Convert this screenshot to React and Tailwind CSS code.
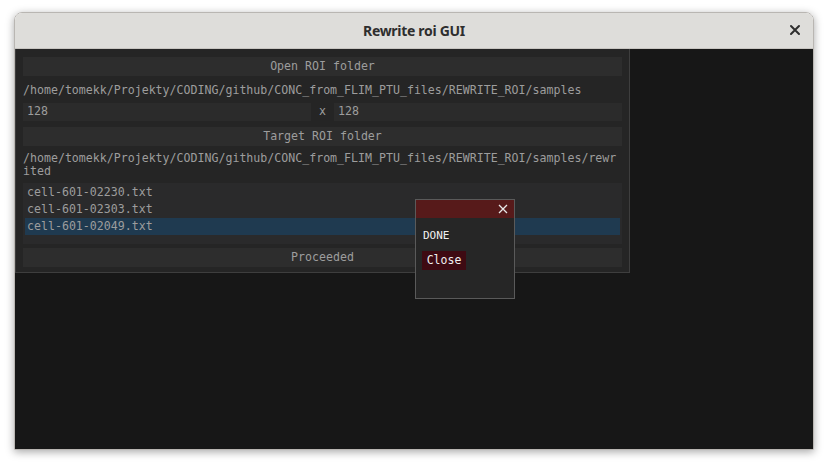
import React from "react";

const mono = "font-['DejaVu_Sans_Mono','Liberation_Mono',monospace]";

const files = ["cell-601-02230.txt", "cell-601-02303.txt", "cell-601-02049.txt"];

export default function App() {
    return (
        <div className="w-[828px] h-[466px] bg-white relative overflow-hidden">
            {/* okno aplikacji */}
            <div className="absolute left-[14px] top-[12px] w-[800px] h-[438px] rounded-t-[8px] overflow-hidden shadow-[0_2px_8px_rgba(0,0,0,0.35)] border border-[#b9b6b2] flex flex-col">
                {/* pasek tytułu */}
                <div className="h-[36px] bg-[#deddda] border-b border-[#c8c5c1] flex items-center justify-center relative shrink-0">
                    <span className="font-['Noto_Sans',sans-serif] text-[14px] font-bold text-[#2e2e2e] tracking-[-0.3px]">
                        Rewrite roi GUI
                    </span>
                    <span className="absolute right-[12px] top-[11px]">
                        <svg width="12" height="12" viewBox="0 0 12 12">
                            <path d="M2 2 L10 10 M10 2 L2 10" stroke="#2e2e2e" strokeWidth="2" strokeLinecap="round" />
                        </svg>
                    </span>
                </div>

                {/* obszar roboczy */}
                <div className={`flex-1 bg-[#171717] relative ${mono} text-[11.6px] text-[#9d9d9d]`}>
                    <div className="w-[615px] h-[224px] bg-[#252525] border border-[#3e3e3e] border-t-0 px-[7px] pt-[8px] flex flex-col">
                        <div className="h-[19px] bg-[#2d2d2d] flex items-center justify-center">Open ROI folder</div>
                        <div className="h-[27px] flex items-center pt-[3px] whitespace-nowrap">
                            /home/tomekk/Projekty/CODING/github/CONC_from_FLIM_PTU_files/REWRITE_ROI/samples
                        </div>
                        <div className="h-[18px] flex items-center">
                            <div className="w-[288px] h-full bg-[#2b2b2b] flex items-center pl-[4px]">128</div>
                            <div className="w-[23px] text-center">x</div>
                            <div className="flex-1 h-full bg-[#2b2b2b] flex items-center pl-[4px]">128</div>
                        </div>
                        <div className="h-[19px] mt-[6px] bg-[#2d2d2d] flex items-center justify-center">Target ROI folder</div>
                        <div className="mt-[6px] h-[31px] leading-[13px] break-all">
                            /home/tomekk/Projekty/CODING/github/CONC_from_FLIM_PTU_files/REWRITE_ROI/samples/rewrited
                        </div>
                        <div className="h-[61px] bg-[#2a2a2b] px-[2px] pt-[1px]">
                            {files.map((f, i) => (
                                <div
                                    key={i}
                                    className={`h-[17px] flex items-center pl-[2px] ${i === 2 ? "bg-[#1f3a50]" : ""}`}
                                >
                                    {f}
                                </div>
                            ))}
                        </div>
                        <div className="h-[19px] mt-[4px] bg-[#2d2d2d] flex items-center justify-center">Proceeded</div>
                    </div>

                    {/* popup */}
                    <div className="absolute left-[400px] top-[150px] w-[100px] h-[100px] bg-[#262626] border border-[#5a5a5a] flex flex-col">
                        <div className="h-[18px] bg-[#571a1a] relative shrink-0">
                            <svg className="absolute right-[6px] top-[4px]" width="10" height="10" viewBox="0 0 10 10">
                                <path d="M1 1 L9 9 M9 1 L1 9" stroke="#e8e8e8" strokeWidth="1.3" />
                            </svg>
                        </div>
                        <div className="px-[7px] pt-[12px] text-[#f0f0f0] text-[11px] leading-[12px]">DONE</div>
                        <div className="ml-[6px] mt-[9px] w-[44px] h-[19px] bg-[#3e0a12] text-[#f0f0f0] text-[11.5px] flex items-center justify-center">
                            Close
                        </div>
                    </div>
                </div>
            </div>
        </div>
    );
}
